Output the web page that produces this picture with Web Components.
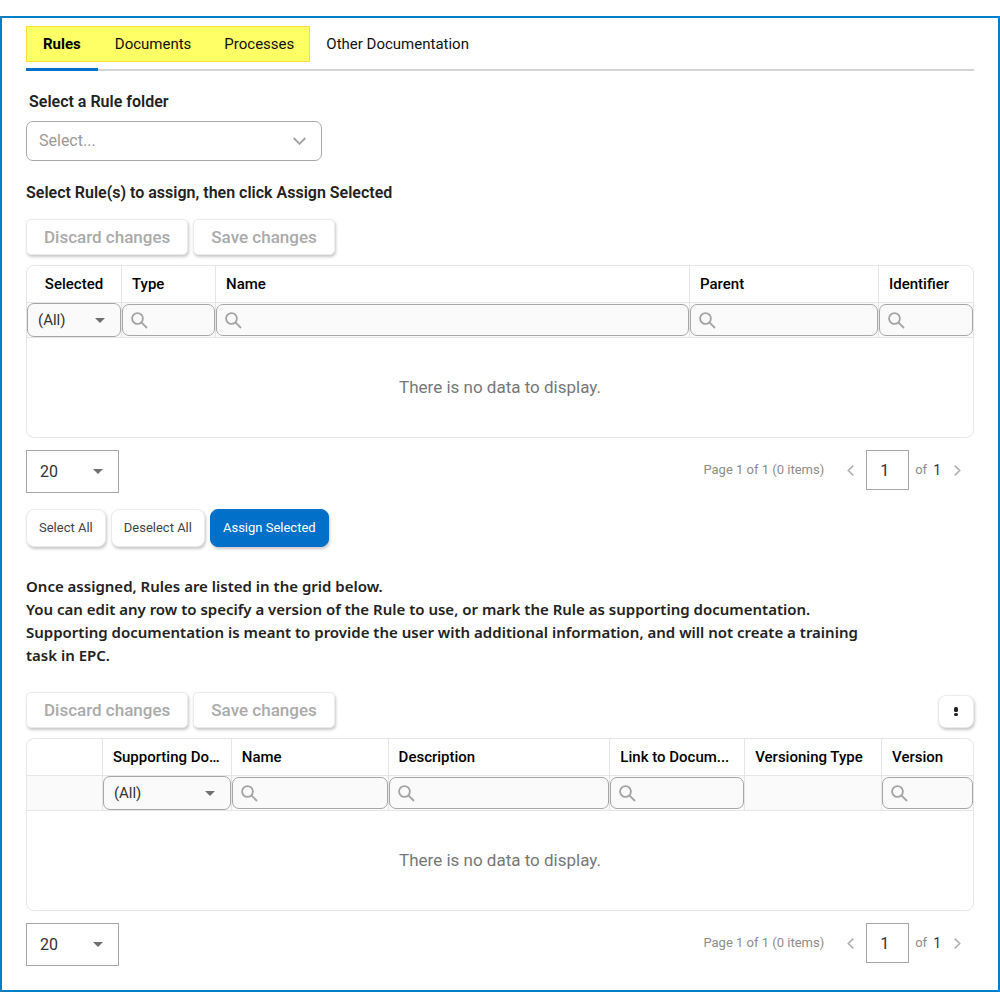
<!DOCTYPE html>
<html lang="en">
<head>
<meta charset="utf-8">
<meta name="viewport" content="width=device-width, initial-scale=1">
<title>Rules</title>
<style>
  body {
    margin: 0;
    background: #fff;
    color: #222;
    font-family: Roboto, "Liberation Sans", sans-serif;
    font-size: 15px;
    line-height: 20px;
  }
  .row {
    display: flex;
    gap: 5px;
  }
  .row.spread {
    align-items: flex-end;
  }
  .row.spread raised-button:last-child {
    margin-left: auto;
  }
  h2 {
    margin: 22px 0 16px;
    font-size: 16px;
    font-weight: 600;
    line-height: 20px;
  }
  .note {
    max-width: 840px;
    margin: 28px 0 25px;
    font-family: "Noto Sans", "Open Sans", sans-serif;
    font-size: 15px;
    font-weight: 600;
    line-height: 23px;
  }
</style>
</head>
<body>
<page-frame>
  <tab-strip tabs="Rules,Documents,Processes,Other Documentation" highlight="3"></tab-strip>
  <folder-select label="Select a Rule folder" placeholder="Select..."></folder-select>
  <h2>Select Rule(s) to assign, then click Assign Selected</h2>
  <div class="row">
    <raised-button variant="toolbar" disabled>Discard changes</raised-button>
    <raised-button variant="toolbar" disabled>Save changes</raised-button>
  </div>
  <data-grid columns="Selected:94:select:center|Type:94:search|Name:474:search|Parent:189:search|Identifier:95:search"></data-grid>
  <grid-pager></grid-pager>
  <div class="row">
    <raised-button>Select All</raised-button>
    <raised-button>Deselect All</raised-button>
    <raised-button variant="primary">Assign Selected</raised-button>
  </div>
  <p class="note">Once assigned, Rules are listed in the grid below.<br>
    You can edit any row to specify a version of the Rule to use, or mark the Rule as supporting documentation.<br>
    Supporting documentation is meant to provide the user with additional information, and will not create a training task in EPC.</p>
  <div class="row spread">
    <raised-button variant="toolbar" disabled>Discard changes</raised-button>
    <raised-button variant="toolbar" disabled>Save changes</raised-button>
    <raised-button variant="icon" label="More actions">
      <svg width="4" height="10" viewBox="0 0 4 10" fill="#222"><rect x="0" y="0" width="4" height="5" rx="1.500"/><rect x="0" y="6" width="4" height="3" rx="1.500"/></svg>
    </raised-button>
  </div>
  <data-grid columns=":75:none|Supporting Do...:129:select|Name:157:search|Description:222:search|Link to Docum...:135:search|Versioning Type:137:none|Version:92:search"></data-grid>
  <grid-pager></grid-pager>
</page-frame>

<script>
class PageFrame extends HTMLElement {
  constructor() {
    super();
    this.attachShadow({ mode: 'open' });
    this.shadowRoot.innerHTML = `
      <style>
        :host {
          display: block;
          box-sizing: border-box;
          min-height: calc(100vh - 16px);
          margin-top: 16px;
          padding: 8px 24px;
          border: 2px solid #0080c6;
        }
      </style>
      <slot></slot>
    `;
  }
}

class TabStrip extends HTMLElement {
  constructor() {
    super();
    this.attachShadow({ mode: 'open' });
  }

  connectedCallback() {
    const tabs = this.getAttribute('tabs').split(',');
    const count = parseInt(this.getAttribute('highlight')) || 0;
    const tab = (name, index) =>
      `<button type="button" role="tab" aria-selected="${index === 0}">${name}</button>`;
    this.shadowRoot.innerHTML = `
      <style>
        :host {
          display: block;
        }
        .strip, .marked {
          display: flex;
        }
        .strip {
          padding-bottom: 7px;
          border-bottom: 2px solid #d4d4d4;
        }
        .marked {
          gap: 1px;
          background: #ffff66;
          box-shadow: inset 0 0 0 1px #ffe033;
        }
        button {
          position: relative;
          height: 36px;
          padding: 0 16px;
          border: 0;
          background: none;
          color: #111;
          font: 15px/20px Roboto, sans-serif;
        }
        [aria-selected="true"] {
          padding: 0 17px;
          color: #000;
          font-weight: 700;
        }
        /* Active marker sits over the strip's bottom line */
        [aria-selected="true"]::after {
          content: '';
          position: absolute;
          left: 0;
          right: 0;
          bottom: -9px;
          height: 3px;
          background: #0070c8;
        }
      </style>
      <div class="strip" role="tablist">
        <div class="marked" role="presentation">${tabs.slice(0, count).map(tab).join('')}</div>
        ${tabs.slice(count).map((name) => tab(name, -1)).join('')}
      </div>
    `;
  }
}

class FolderSelect extends HTMLElement {
  constructor() {
    super();
    this.attachShadow({ mode: 'open' });
  }

  connectedCallback() {
    this.shadowRoot.innerHTML = `
      <style>
        :host {
          display: block;
          margin-top: 21px;
        }
        label {
          display: block;
          margin: 0 0 9px 3px;
          font-size: 16px;
          font-weight: 600;
        }
        .box {
          display: grid;
          align-items: center;
          max-width: 296px;
        }
        select, svg {
          grid-area: 1 / 1;
        }
        select {
          appearance: none;
          width: 100%;
          height: 40px;
          padding: 0 12px;
          border: 1px solid #a9a9a9;
          border-radius: 7px;
          background: #fff;
          color: #999;
          font: 16px/20px Roboto, sans-serif;
        }
        svg {
          justify-self: end;
          margin-right: 16px;
          pointer-events: none;
        }
      </style>
      <label for="folder">${this.getAttribute('label')}</label>
      <div class="box">
        <select id="folder"><option>${this.getAttribute('placeholder')}</option></select>
        <svg width="13" height="8" viewBox="0 0 13 8" fill="none" stroke="#a0a0a0" stroke-width="1.800"><path d="M.7 1l5.800 5.800L12.300 1"/></svg>
      </div>
    `;
  }
}

class RaisedButton extends HTMLElement {
  constructor() {
    super();
    this.attachShadow({ mode: 'open' });
  }

  connectedCallback() {
    const label = this.getAttribute('label');
    this.shadowRoot.innerHTML = `
      <style>
        :host {
          display: block;
        }
        button {
          display: flex;
          align-items: center;
          justify-content: center;
          height: 38px;
          padding: 0 12px;
          border: 1px solid #ebebeb;
          border-radius: 8px;
          background: #fff;
          box-shadow: 1px 2px 3px rgba(0, 0, 0, .22);
          color: #444;
          font: 13px/20px Roboto, sans-serif;
        }
        :host([variant="primary"]) button {
          border-color: #0070c8;
          background: #0070c8;
          color: #fff;
        }
        :host([variant="toolbar"]) button {
          height: 36px;
          padding: 0 17px;
          border-radius: 5px;
          color: #aaa;
          font-size: 17px;
          font-weight: 500;
        }
        :host([variant="icon"]) button {
          width: 36px;
          height: 33px;
          padding: 0;
        }
      </style>
      <button type="button" ${label ? `aria-label="${label}"` : ''} ${this.hasAttribute('disabled') ? 'disabled' : ''}><slot></slot></button>
    `;
  }
}

class DataGrid extends HTMLElement {
  constructor() {
    super();
    this.attachShadow({ mode: 'open' });
  }

  // Each column is "title:weight:filter:align"
  get columns() {
    return this.getAttribute('columns').split('|').map((part) => {
      const [title, weight, filter, align] = part.split(':');
      return { title, weight: Number(weight), filter, align: align || 'left' };
    });
  }

  connectedCallback() {
    const columns = this.columns;
    const total = columns.reduce((sum, column) => sum + column.weight, 0);
    this.shadowRoot.innerHTML = `
      <style>
        :host {
          display: block;
          margin: 10px 0 12px;
          border: 1px solid #e6e6e6;
          border-radius: 8px;
          overflow: hidden;
        }
        table {
          width: 100%;
          table-layout: fixed;
          border-spacing: 0;
        }
        th, td {
          box-sizing: border-box;
          padding: 0;
          border-bottom: 1px solid #e6e6e6;
        }
        th + th, td + td {
          border-left: 1px solid #e6e6e6;
        }
        th {
          height: 37px;
          padding: 0 10px 1px;
          overflow: hidden;
          color: #000;
          font-size: 15px;
          font-weight: 500;
          text-overflow: ellipsis;
          white-space: nowrap;
        }
        .filters td {
          height: 35px;
          background: #fafafa;
        }
        .field {
          display: grid;
          align-items: center;
        }
        .field > * {
          grid-area: 1 / 1;
        }
        input, select {
          box-sizing: border-box;
          width: 100%;
          min-width: 0;
          margin: 0;
          border: 1px solid #a6a6a6;
          border-radius: 7px;
          background: none;
          color: #333;
          font: 15px/20px Roboto, sans-serif;
        }
        input {
          height: 32px;
          padding: 0 8px 0 34px;
        }
        select {
          appearance: none;
          height: 34px;
          padding: 0 10px;
        }
        svg {
          pointer-events: none;
        }
        .search {
          margin-left: 9px;
        }
        .arrow {
          justify-self: end;
          margin-right: 16px;
        }
        .empty td {
          height: 99px;
          padding-bottom: 2px;
          border: 0;
          color: #777;
          font-size: 17px;
          text-align: center;
        }
      </style>
      <table>
        <colgroup>${columns.map((column) => `<col style="width: ${column.weight / total * 100}%">`).join('')}</colgroup>
        <thead>
          <tr>${columns.map((column) => `<th scope="col" style="text-align: ${column.align}">${column.title}</th>`).join('')}</tr>
          <tr class="filters">${columns.map((column) => `<td>${this.filterField(column)}</td>`).join('')}</tr>
        </thead>
        <tbody>
          <tr class="empty"><td colspan="${columns.length}">There is no data to display.</td></tr>
        </tbody>
      </table>
    `;
  }

  filterField({ title, filter }) {
    if (filter === 'select') {
      return `<div class="field">
        <select aria-label="Filter ${title}"><option>(All)</option></select>
        <svg class="arrow" width="10" height="5" viewBox="0 0 10 5" fill="#707070"><path d="M0 0h10L5 5z"/></svg>
      </div>`;
    }
    if (filter === 'search') {
      return `<div class="field">
        <input type="text" aria-label="Filter ${title}">
        <svg class="search" width="17" height="17" viewBox="0 0 17 17" fill="none" stroke="#a3a3a3" stroke-width="1.800"><circle cx="6.500" cy="6.500" r="5.400"/><path d="M10.400 10.400L16 16"/></svg>
      </div>`;
    }
    return '';
  }
}

class GridPager extends HTMLElement {
  constructor() {
    super();
    this.attachShadow({ mode: 'open' });
    this.shadowRoot.innerHTML = `
      <style>
        :host {
          display: flex;
          justify-content: space-between;
          align-items: flex-start;
          margin-bottom: 16px;
        }
        .size {
          display: grid;
          align-items: center;
          width: 93px;
        }
        .size > * {
          grid-area: 1 / 1;
        }
        select, input {
          box-sizing: border-box;
          margin: 0;
          border: 1px solid #a6a6a6;
          border-radius: 0;
          background: #fff;
          color: #333;
          font: 16px/20px Roboto, sans-serif;
        }
        select {
          appearance: none;
          width: 100%;
          height: 43px;
          padding: 0 13px;
        }
        .size svg {
          justify-self: end;
          margin-right: 16px;
          pointer-events: none;
        }
        nav {
          display: flex;
          align-items: center;
          gap: 6px;
          padding-right: 7px;
          color: #8c8c8c;
          font-size: 13px;
        }
        .info {
          margin-right: 10px;
        }
        input {
          width: 43px;
          height: 40px;
          padding: 0 8px 0 13px;
        }
        nav button {
          display: flex;
          align-items: center;
          justify-content: center;
          width: 20px;
          height: 24px;
          padding: 0;
          border: 0;
          background: none;
        }
        .count {
          color: #333;
          font-size: 14px;
        }
      </style>
      <div class="size">
        <select aria-label="Rows per page"><option>20</option></select>
        <svg width="10" height="5" viewBox="0 0 10 5" fill="#707070"><path d="M0 0h10L5 5z"/></svg>
      </div>
      <nav aria-label="Pages">
        <span class="info">Page 1 of 1 (0 items)</span>
        <button type="button" aria-label="Previous page"><svg width="7" height="11" viewBox="0 0 7 11" fill="none" stroke="#b0b0b0" stroke-width="1.600"><path d="M6.300.6L1.300 5.500l5 4.900"/></svg></button>
        <input type="text" value="1" aria-label="Page number">
        <span>of</span>
        <span class="count">1</span>
        <button type="button" aria-label="Next page"><svg width="7" height="11" viewBox="0 0 7 11" fill="none" stroke="#b0b0b0" stroke-width="1.600"><path d="M.7.6l5 4.900-5 4.900"/></svg></button>
      </nav>
    `;
  }
}

customElements.define('page-frame', PageFrame);
customElements.define('tab-strip', TabStrip);
customElements.define('folder-select', FolderSelect);
customElements.define('raised-button', RaisedButton);
customElements.define('data-grid', DataGrid);
customElements.define('grid-pager', GridPager);
</script>
</body>
</html>
